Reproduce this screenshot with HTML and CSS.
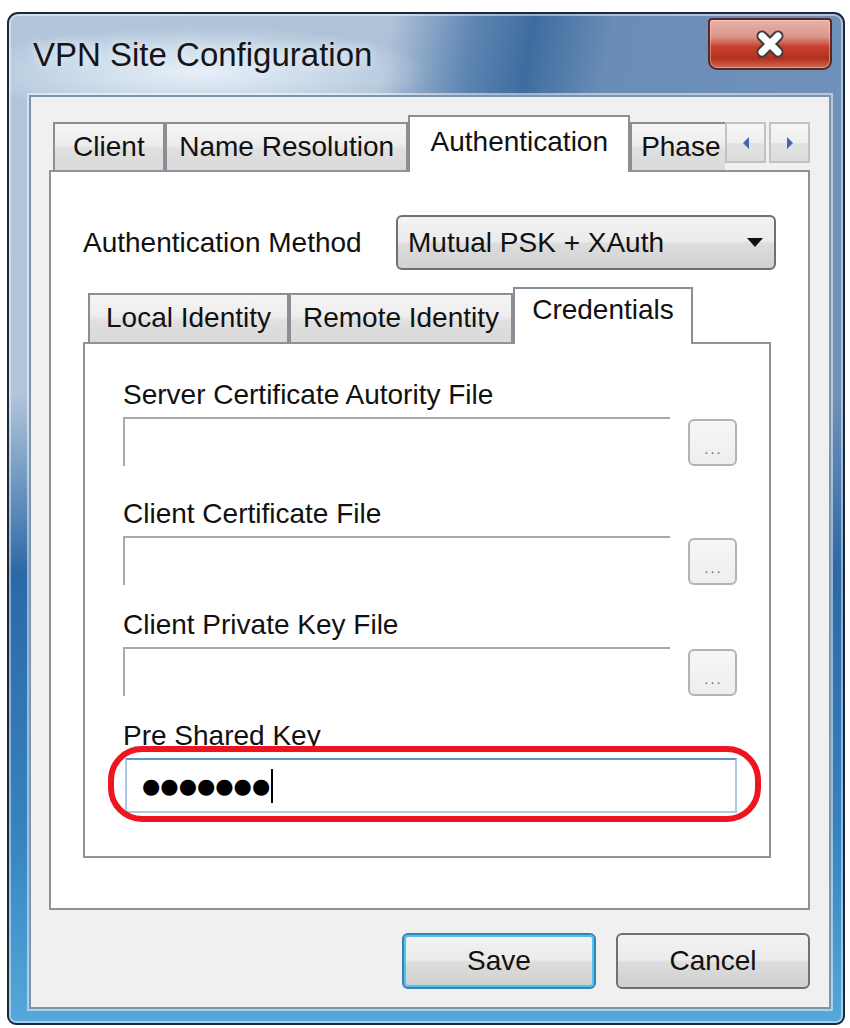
FILE: index.html
```html
<!DOCTYPE html>
<html lang="en">
<head>
<meta charset="utf-8">
<title>VPN Site Configuration</title>
<link rel="stylesheet" href="styles.css">
</head>
<body>
<div class="window">
  <div class="titlebar">
    <div class="title">VPN Site Configuration</div>
    <div class="close-btn">
      <svg width="32" height="28" viewBox="0 0 32 28" aria-hidden="true">
        <path d="M8 6 L24 22 M24 6 L8 22" stroke="#3c3c3c" stroke-width="11" stroke-linecap="round" fill="none"/>
        <path d="M8 6 L24 22 M24 6 L8 22" stroke="#ffffff" stroke-width="7" stroke-linecap="round" fill="none"/>
      </svg>
    </div>
  </div>

  <div class="client">
    <div class="tabctl">
      <div class="tabstrip">
        <div class="tab tab-client">Client</div>
        <div class="tab tab-names">Name Resolution</div>
        <div class="tab is-active tab-auth">Authentication</div>
        <div class="tab is-clipped tab-phase">Phase</div>
        <div class="scrollers">
          <div class="scroll-btn">
            <svg width="8" height="12" viewBox="0 0 8 12"><path d="M7 0 L1 6 L7 12 Z" fill="#4065b5"/></svg>
          </div>
          <div class="scroll-btn">
            <svg width="8" height="12" viewBox="0 0 8 12"><path d="M1 0 L7 6 L1 12 Z" fill="#4065b5"/></svg>
          </div>
        </div>
      </div>

      <div class="panel outer-panel">
        <div class="auth-row">
          <span class="label">Authentication Method</span>
          <div class="dropdown">
            <span class="dropdown-text">Mutual PSK + XAuth</span>
            <svg class="dropdown-arrow" width="16" height="9" viewBox="0 0 16 9"><path d="M0 0 H16 L8 9 Z" fill="#111"/></svg>
          </div>
        </div>

        <div class="tabctl inner-tabctl">
          <div class="tabstrip inner-strip">
            <div class="tab inner tab-local">Local Identity</div>
            <div class="tab inner tab-remote">Remote Identity</div>
            <div class="tab inner is-active tab-cred">Credentials</div>
          </div>

          <div class="panel inner-panel">
            <div class="fgroup first">
              <div class="label">Server Certificate Autority File</div>
              <div class="frow">
                <div class="file-field"></div>
                <div class="browse">...</div>
              </div>
            </div>
            <div class="fgroup">
              <div class="label">Client Certificate File</div>
              <div class="frow">
                <div class="file-field"></div>
                <div class="browse">...</div>
              </div>
            </div>
            <div class="fgroup">
              <div class="label">Client Private Key File</div>
              <div class="frow">
                <div class="file-field"></div>
                <div class="browse">...</div>
              </div>
            </div>
            <div class="fgroup">
              <div class="label">Pre Shared Key</div>
              <div class="psk-field">
                <span class="psk-dots">●●●●●●●</span><span class="caret"></span>
                <div class="ring"></div>
              </div>
            </div>
          </div>
        </div>
      </div>
    </div>

    <div class="actions">
      <div class="btn btn-default">Save</div>
      <div class="btn">Cancel</div>
    </div>
  </div>
</div>
</body>
</html>
```

FILE: styles.css
```css
html, body {
  margin: 0;
  padding: 0;
  background: #ffffff;
}

body {
  font-family: "Liberation Sans", Arial, sans-serif;
  color: #111;
}

/* ---- Aero window frame ---- */
.window {
  box-sizing: border-box;
  width: 838px;
  height: 1013px;
  margin: 12px 0 0 7px;
  border: 2px solid #1b2940;
  border-radius: 11px 11px 9px 9px;
  padding: 0 12px 14px 20px;
  display: flex;
  flex-direction: column;
  box-shadow: inset 0 0 0 2px rgba(255, 255, 255, 0.45);
  background:
    radial-gradient(ellipse 230px 46px at 190px 58px, rgba(236, 243, 250, 0.95) 0%, rgba(220, 232, 244, 0.6) 55%, rgba(200, 218, 236, 0) 100%),
    linear-gradient(to bottom, rgba(47, 104, 164, 0) 0px, rgba(47, 104, 164, 0) 380px, rgba(44, 104, 166, 1) 560px, #3683c0 820px, #56a9da 1013px),
    linear-gradient(100deg, #b2c6db 0%, #aec2d8 38%, #5f86b3 46%, #3f6c9f 52%, #6a8db7 60%, #7293bb 100%);
}

.titlebar {
  height: 81px;
  display: flex;
  align-items: flex-start;
  flex: none;
}

.title {
  margin: 21px 0 0 4px;
  font-size: 33px;
  line-height: 40px;
  color: #151515;
  text-shadow: 0 0 8px rgba(235, 242, 250, 0.9), 0 0 16px rgba(225, 235, 246, 0.8);
}

.close-btn {
  margin: 4px -1px 0 auto;
  width: 124px;
  height: 52px;
  box-sizing: border-box;
  border: 2px solid #5e2622;
  border-radius: 4px 4px 9px 9px;
  background: linear-gradient(to bottom, #e7b3aa 0%, #dc958a 35%, #c8412f 55%, #b3301f 80%, #cf6a52 100%);
  box-shadow: inset 0 0 0 1px rgba(255, 220, 210, 0.45);
  display: flex;
  align-items: center;
  justify-content: center;
}

/* ---- client area ---- */
.client {
  flex: 1;
  background: #f0f0f0;
  border: 2px solid #7f93ab;
  box-shadow: 0 0 0 2px rgba(255, 255, 255, 0.5);
  padding: 18px 19px 18px 18px;
  display: flex;
  flex-direction: column;
}

.label {
  font-size: 28px;
  line-height: 32px;
  white-space: nowrap;
}

/* ---- tab controls ---- */
.tabctl {
  display: flex;
  flex-direction: column;
}

.tabstrip {
  display: flex;
  align-items: flex-end;
  height: 55px;
  padding-left: 4px;
}

.tab {
  box-sizing: border-box;
  height: 48px;
  padding-top: 7px;
  border: 2px solid #8b8e95;
  border-bottom: none;
  background: linear-gradient(to bottom, #f5f5f5 0%, #ededed 45%, #e0e0e0 55%, #d9d9d9 100%);
  font-size: 28px;
  line-height: 32px;
  text-align: center;
  white-space: nowrap;
}

.tab.is-active {
  height: 57px;
  padding-top: 9px;
  margin-bottom: -2px;
  background: #ffffff;
  position: relative;
  z-index: 1;
}

.tab.is-clipped {
  border-right: none;
  overflow: hidden;
  text-align: left;
  padding-left: 9px;
}

.tab-client { width: 112px; }
.tab-names { width: 244px; }
.tab-auth { width: 222px; }
.tab-phase { width: 95px; }

.scrollers {
  display: flex;
  gap: 3px;
  margin-bottom: 7px;
}

.scroll-btn {
  box-sizing: border-box;
  width: 41px;
  height: 41px;
  border: 2px solid #c2c2c2;
  background: linear-gradient(to bottom, #f6f6f6 0%, #eeeeee 50%, #e2e2e2 52%, #dcdcdc 100%);
  display: flex;
  align-items: center;
  justify-content: center;
}

.panel {
  background: #ffffff;
  border: 2px solid #8f9298;
  box-sizing: border-box;
}

.outer-panel {
  height: 740px;
  padding: 43px 32px 0 32px;
}

/* ---- authentication method row ---- */
.auth-row {
  display: flex;
  align-items: center;
  height: 55px;
}

.dropdown {
  margin-left: auto;
  width: 380px;
  height: 55px;
  box-sizing: border-box;
  border: 2px solid #707070;
  border-radius: 6px;
  background: linear-gradient(to bottom, #f3f3f3 0%, #ebebeb 48%, #dddddd 52%, #d1d1d1 100%);
  display: flex;
  align-items: center;
  padding: 0 11px 0 10px;
}

.dropdown-text {
  font-size: 28px;
  line-height: 32px;
  flex: 1;
}

.dropdown-arrow {
  flex: none;
}

/* ---- nested tab control ---- */
.inner-tabctl {
  margin: 17px 5px 0 0;
}

.inner-strip {
  padding-left: 5px;
}

.tab.inner {
  height: 49px;
  padding-top: 7px;
}

.tab.inner.is-active {
  height: 57px;
  padding-top: 5px;
}

.tab-local { width: 201px; }
.tab-remote { width: 224px; }
.tab-cred { width: 180px; }

.inner-panel {
  height: 516px;
  padding: 35px 32px 0 38px;
  display: flex;
  flex-direction: column;
  gap: 24px;
}

/* ---- credential fields ---- */
.fgroup {
  display: flex;
  flex-direction: column;
  gap: 6px;
}

.fgroup.first {
  margin-bottom: 8px;
}

.frow {
  display: flex;
  align-items: flex-end;
  gap: 18px;
  height: 49px;
}

.file-field {
  flex: 1;
  height: 49px;
  box-sizing: border-box;
  border-top: 2px solid #a9a9a9;
  border-left: 2px solid #a9a9a9;
}

.browse {
  box-sizing: border-box;
  width: 49px;
  height: 47px;
  border: 2px solid #b3b3b3;
  border-radius: 6px;
  background: linear-gradient(to bottom, #f6f6f6, #eeeeee);
  color: #6e6e6e;
  font-size: 15px;
  letter-spacing: 2px;
  line-height: 15px;
  text-align: center;
  display: flex;
  align-items: flex-end;
  justify-content: center;
  padding: 0 0 8px 2px;
}

.psk-field {
  position: relative;
  margin-left: 2px;
  height: 55px;
  box-sizing: border-box;
  border: 2px solid #a9c9e6;
  border-top-color: #5f96c9;
  background: #ffffff;
  display: flex;
  align-items: center;
  padding-left: 15px;
}

.psk-dots {
  font-family: "DejaVu Sans", sans-serif;
  font-size: 21px;
  letter-spacing: 0;
  line-height: 30px;
  color: #000;
}

.caret {
  width: 2px;
  height: 34px;
  background: #000;
  margin-left: 1px;
}

/* red highlight ring drawn over the key field */
.ring {
  position: absolute;
  left: -19px;
  top: -14px;
  right: -26px;
  bottom: -11px;
  border: 6px solid #ee1420;
  border-radius: 34px;
  pointer-events: none;
}

/* ---- dialog buttons ---- */
.actions {
  margin-top: 23px;
  display: flex;
  justify-content: flex-end;
  gap: 20px;
  height: 56px;
}

.btn {
  box-sizing: border-box;
  width: 194px;
  height: 56px;
  border: 2px solid #707070;
  border-radius: 6px;
  background: linear-gradient(to bottom, #f3f3f3 0%, #ebebeb 48%, #dddddd 52%, #cfcfcf 100%);
  font-size: 28px;
  line-height: 32px;
  display: flex;
  align-items: center;
  justify-content: center;
}

.btn-default {
  border-color: #3c7fb1;
  box-shadow: inset 0 0 0 2px #4fc3f3;
}
```
